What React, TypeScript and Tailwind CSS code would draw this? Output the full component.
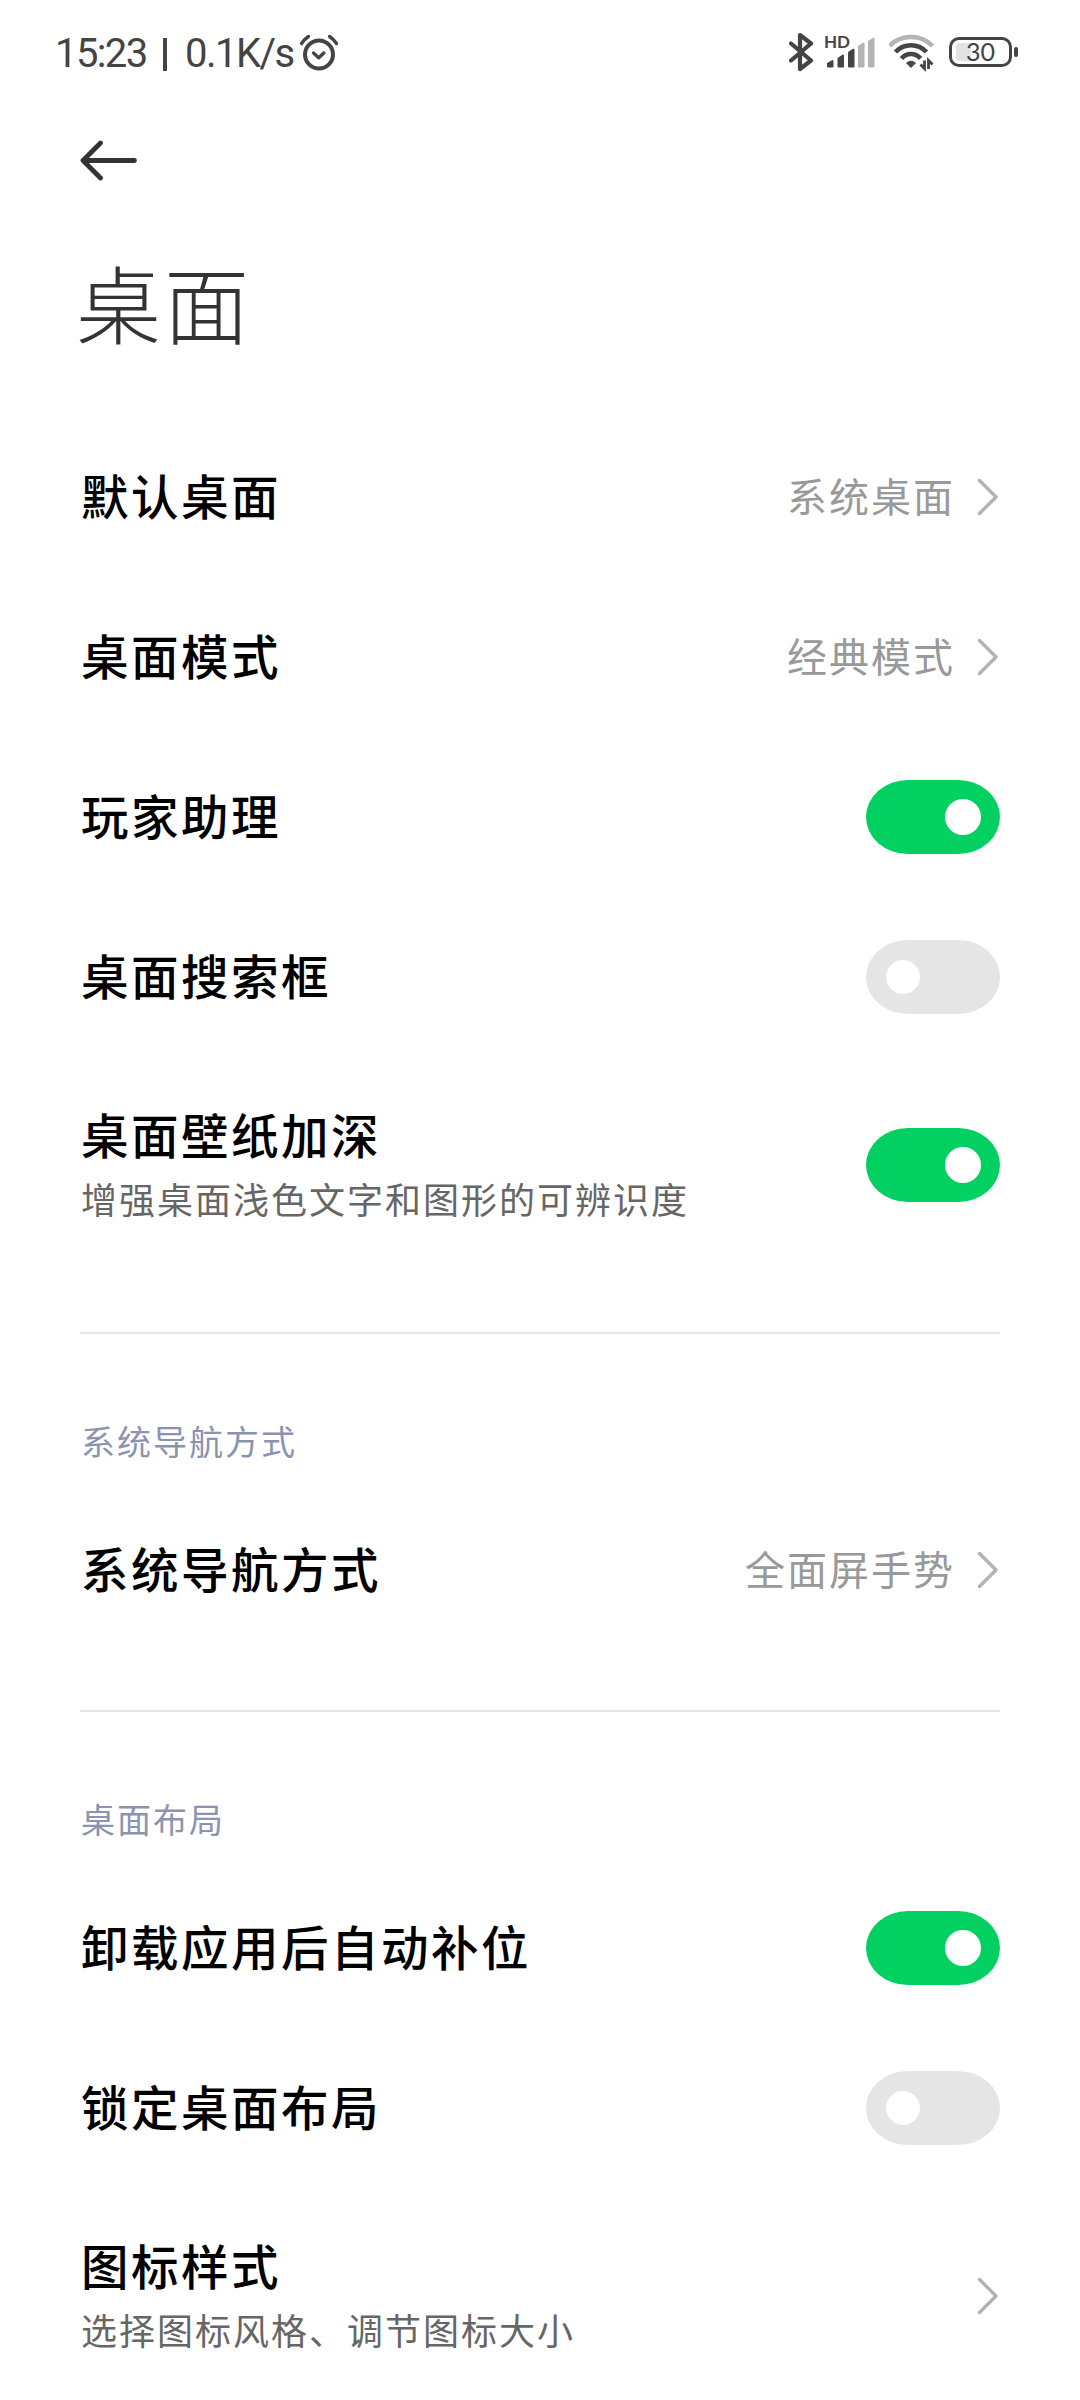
import React from 'react';

interface ItemProps {
  title: string;
  summary?: string;
  value?: string;
  checked?: boolean;
}

interface Section {
  label?: string;
  items: ItemProps[];
}

const sections: Section[] = [
  {
    items: [
      { title: '默认桌面', value: '系统桌面' },
      { title: '桌面模式', value: '经典模式' },
      { title: '玩家助理', checked: true },
      { title: '桌面搜索框', checked: false },
      { title: '桌面壁纸加深', summary: '增强桌面浅色文字和图形的可辨识度', checked: true },
    ],
  },
  {
    label: '系统导航方式',
    items: [{ title: '系统导航方式', value: '全面屏手势' }],
  },
  {
    label: '桌面布局',
    items: [
      { title: '卸载应用后自动补位', checked: true },
      { title: '锁定桌面布局', checked: false },
      { title: '图标样式', summary: '选择图标风格、调节图标大小' },
    ],
  },
];

const AlarmIcon = () => (
  <svg className="w-10 h-10" viewBox="0 0 40 40" fill="none" stroke="#444" strokeLinecap="round" strokeLinejoin="round">
    <circle cx="20" cy="21.5" r="14" strokeWidth="4" />
    <path d="M14.5 20l5.2 4.8 5.2-4.8" strokeWidth="3.4" />
    <path d="M2.5 10.5Q5.5 6 9.5 3.5M37.5 10.5Q34.5 6 30.5 3.5" strokeWidth="3.4" />
  </svg>
);

const BluetoothIcon = () => (
  <svg className="w-[26px] h-10" viewBox="0 0 26 40" fill="none" stroke="#444" strokeWidth="4.2" strokeLinecap="round" strokeLinejoin="round">
    <path d="M2 11.5L22 28.5L11 37V3L22 11.5L2 28.5" />
  </svg>
);

const SignalIcon = () => (
  <div className="relative w-[52px] h-10">
    <span className="absolute -left-[2px] top-[2px] font-['Lato',sans-serif] text-[17px] leading-[16px] font-bold text-[#444]">HD</span>
    <svg className="w-[52px] h-10" viewBox="0 0 52 40" strokeLinejoin="round" strokeWidth="2">
      <g fill="#444" stroke="#444">
        <path d="M2 31.5L6.5 29V34.5H2Z" />
        <path d="M12.5 26.5L17 23.5V34.5H12.5Z" />
        <path d="M23 20.5L27.5 17.5V34.5H23Z" />
      </g>
      <g fill="#b4b4b4" stroke="#b4b4b4">
        <path d="M33 14.5L37.500 11.500V34.500H33Z" />
        <path d="M43 9.500L47.500 6.500V34.500H43Z" />
      </g>
    </svg>
  </div>
);

const WifiIcon = () => (
  <svg className="w-[46px] h-10" viewBox="0 0 46 40" fill="none" strokeWidth="4.6">
    <path d="M0.5 14C12 2 32 2 43.5 14" stroke="#b4b4b4" />
    <path d="M6.5 20C15 11 29 11 37.5 20" stroke="#444" />
    <path d="M12.5 26.5C17.500 20.500 26.500 20.500 31.500 26.500" stroke="#444" />
    <path d="M17.500 31Q22 27.500 26.500 31L22 35.500Z" fill="#444" stroke="#444" strokeWidth="1" strokeLinejoin="round" />
    <path d="M35.500 28.500V36.500L31.500 32.500M39.500 37V28.500L43.500 32.500" stroke="#444" strokeWidth="2.800" />
  </svg>
);

const BatteryIcon = () => (
  <div className="flex items-center gap-[2px]">
    <div className="relative w-[63px] h-[30px] rounded-[10px] border-[3px] border-[#444] flex items-center justify-center">
      <div className="absolute left-1 top-[3px] w-[15px] h-[18px] rounded-l-[4px] bg-[#e3e3e3]" />
      <span className="relative pb-[2px] font-['Lato',sans-serif] text-[25px] leading-[24px] text-[#444]">30</span>
    </div>
    <div className="w-1 h-[10px] rounded-[2px] bg-[#444]" />
  </div>
);

const StatusBar = () => (
  <div className="h-[104px] pl-[55px] pr-[62px] flex items-start justify-between">
    <div className="pt-8 flex items-center">
      <div className="w-[244px] pt-[2px] flex items-center whitespace-nowrap font-['Roboto',sans-serif] text-[40px] leading-10 text-[#444]">
        <span className="w-[108px] tracking-[-1.6px]">15:23</span>
        <span className="w-1 h-[33px] mr-[18px] bg-[#444]" />
        <span className="tracking-[-1.5px]">0.1K/s</span>
      </div>
      <AlarmIcon />
    </div>
    <div className="pt-8 flex items-center">
      <BluetoothIcon />
      <div className="ml-[11px]"><SignalIcon /></div>
      <div className="ml-[11px]"><WifiIcon /></div>
      <div className="ml-[14px]"><BatteryIcon /></div>
    </div>
  </div>
);

const Switch: React.FC<{ on: boolean }> = ({ on }) => (
  <div className={`w-[134px] h-[74px] shrink-0 rounded-[42px/37px] flex items-center ${on ? 'justify-end pr-[19px] bg-[#02d162]' : 'pl-5 bg-[#e5e5e5]'}`}>
    <div className={`rounded-full bg-white ${on ? 'w-9 h-9' : 'w-[34px] h-[34px]'}`} />
  </div>
);

const Chevron = () => (
  <svg className="w-[22px] h-10 mr-[1px]" viewBox="0 0 22 40" fill="none" stroke="#b2b2b2" strokeWidth="3.4" strokeLinecap="round" strokeLinejoin="round">
    <path d="M2.5 3.5L19 20L2.5 36.5" />
  </svg>
);

const Item: React.FC<ItemProps> = ({ title, summary, value, checked }) => (
  <div className={`flex items-center justify-between ${summary ? 'h-[215px]' : 'h-40'}`}>
    <div className="pl-[1px] pb-[5px]">
      <div className="text-[47.5px] leading-[64px] tracking-[2.5px] font-medium text-black">{title}</div>
      {summary && <div className="mt-2 text-[36px] leading-[48px] tracking-[2px] text-[#666]">{summary}</div>}
    </div>
    {checked !== undefined ? (
      <Switch on={checked} />
    ) : (
      <div className="flex items-center gap-[22px]">
        {value && <span className="pb-[5px] text-[40px] leading-[56px] tracking-[2px] text-[#999]">{value}</span>}
        <Chevron />
      </div>
    )}
  </div>
);

const App: React.FC = () => {
  return (
    <div className="w-[1080px] h-[2400px] overflow-hidden bg-white font-['Noto_Sans_CJK_SC',sans-serif]">
      <StatusBar />

      {/* Header */}
      <div className="h-[313px] px-20">
        <svg className="w-[58px] h-28" viewBox="0 0 58 112" fill="none" stroke="#333" strokeWidth="4.8" strokeLinecap="round" strokeLinejoin="round">
          <path d="M54.5 56.5H3M20.5 39L3 56.5L20.5 74" />
        </svg>
        <h1 className="mt-[25px] -ml-1 text-[85px] leading-[120px] tracking-[3px] font-light text-[#333]">桌面</h1>
      </div>

      {/* Settings */}
      <div className="px-20">
        {sections.map((section, i) => (
          <section key={i}>
            {i > 0 && <div className="mt-[60px] h-[2px] bg-[#e5e5e5]" />}
            {section.label && (
              <div className="h-[156px] pt-[83px] pl-[1px] text-[34px] leading-[48px] tracking-[2px] text-[#8c93b0]">
                {section.label}
              </div>
            )}
            {section.items.map((item) => (
              <Item key={item.title} {...item} />
            ))}
          </section>
        ))}
      </div>
    </div>
  );
};

export default App;
